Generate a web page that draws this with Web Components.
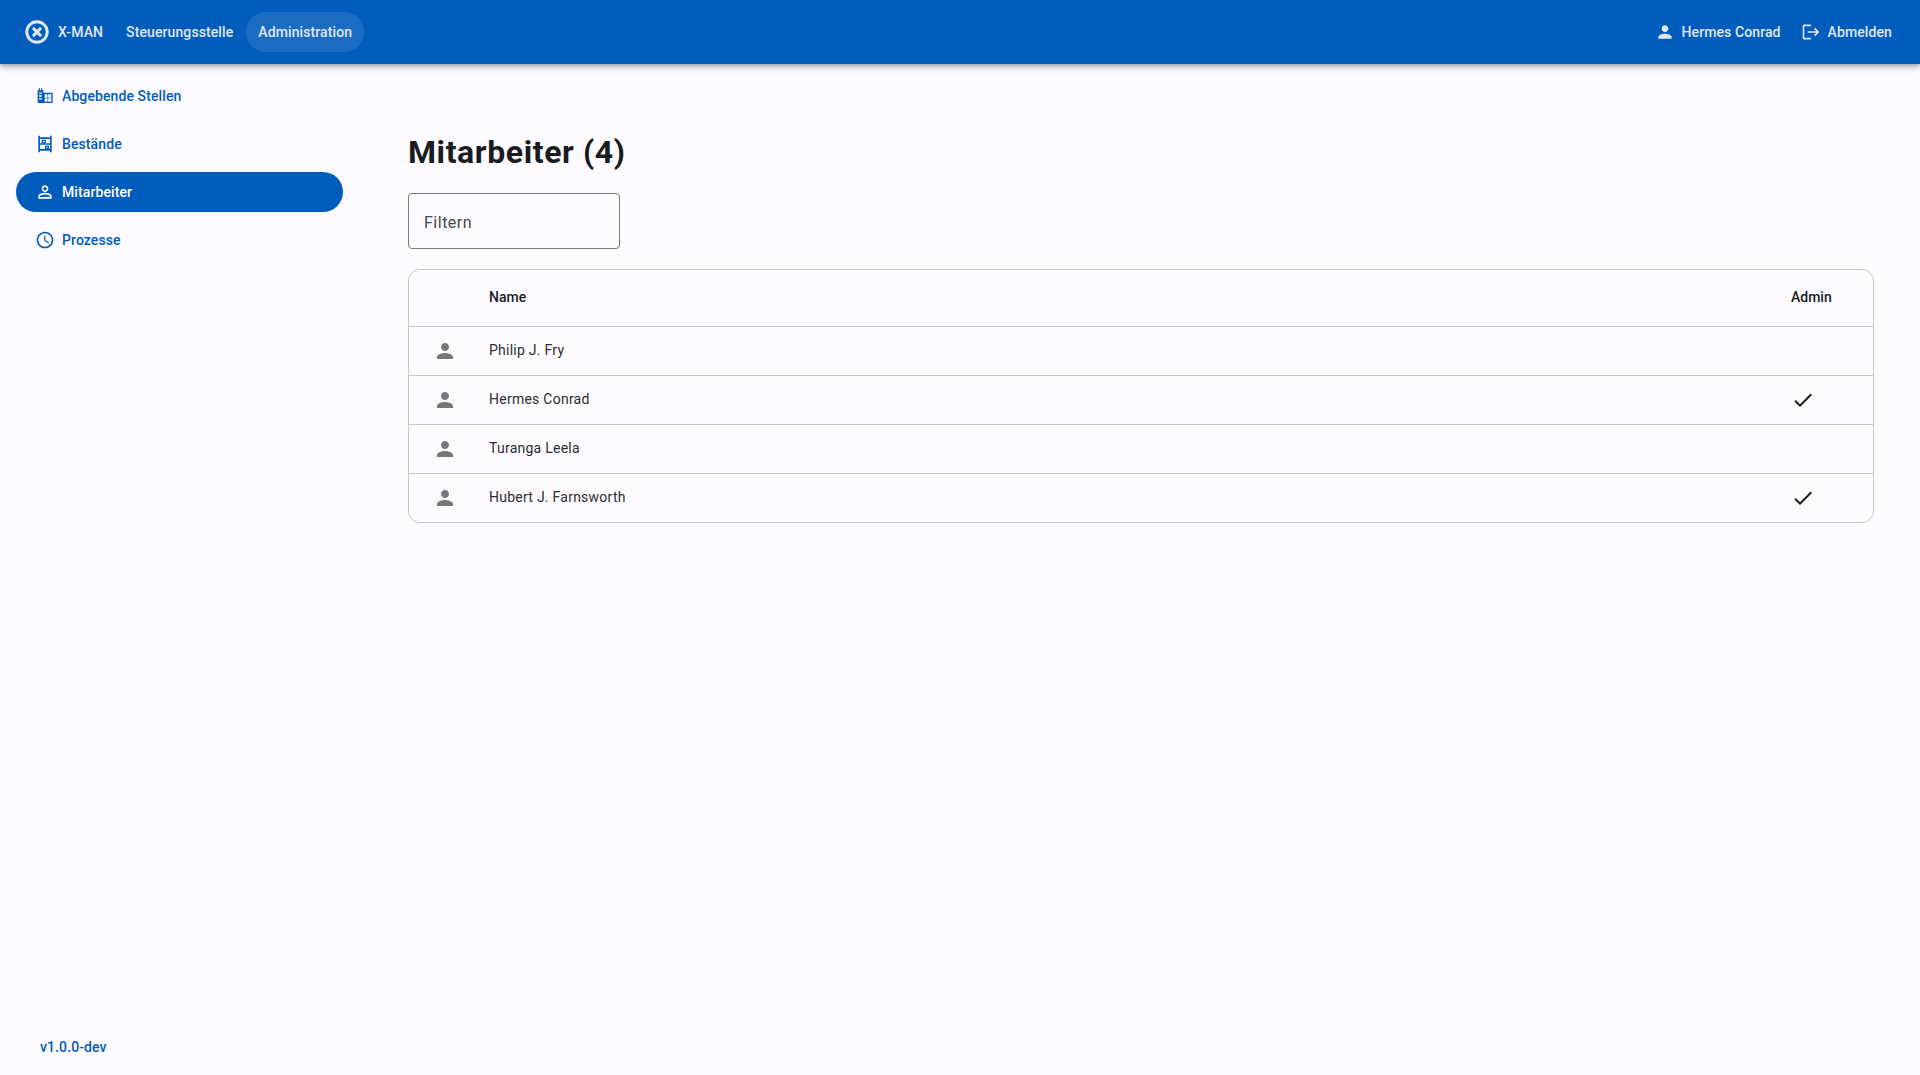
<!DOCTYPE html>
<html lang="de">
<head>
<meta charset="utf-8">
<title>X-MAN</title>
<style>
    html, body { margin: 0; height: 100%; }
    body {
        background: #fdfbff;
        color: #1a1b1f;
        font-family: Roboto, "Liberation Sans", sans-serif;
    }
</style>
</head>
<body>
<xman-app>
    <xman-header slot="header"></xman-header>
    <xman-sidenav slot="side">
        <xman-nav-item icon="domain">Abgebende Stellen</xman-nav-item>
        <xman-nav-item icon="shelves">Bestände</xman-nav-item>
        <xman-nav-item icon="person_outline" active>Mitarbeiter</xman-nav-item>
        <xman-nav-item icon="schedule">Prozesse</xman-nav-item>
    </xman-sidenav>
    <xman-staff-page>
        <xman-staff-row name="Philip J. Fry"></xman-staff-row>
        <xman-staff-row name="Hermes Conrad" admin></xman-staff-row>
        <xman-staff-row name="Turanga Leela"></xman-staff-row>
        <xman-staff-row name="Hubert J. Farnsworth" admin></xman-staff-row>
    </xman-staff-page>
</xman-app>

<script>
const ICONS = {
    person: '<path d="M12 12c2.21 0 4-1.79 4-4s-1.79-4-4-4-4 1.79-4 4 1.79 4 4 4zm0 2c-2.67 0-8 1.34-8 4v2h16v-2c0-2.66-5.33-4-8-4z"/>',
    person_outline: '<path d="M12 5.9c1.16 0 2.1.94 2.1 2.1s-.94 2.1-2.1 2.1S9.9 9.16 9.9 8s.94-2.1 2.1-2.1m0 9c2.97 0 6.1 1.46 6.1 2.1v1.1H5.9V17c0-.64 3.13-2.1 6.1-2.1M12 4C9.79 4 8 5.79 8 8s1.79 4 4 4 4-1.79 4-4-1.79-4-4-4zm0 9c-2.67 0-8 1.34-8 4v3h16v-3c0-2.66-5.33-4-8-4z"/>',
    logout: '<path d="M17 7l-1.41 1.41L18.17 11H8v2h10.17l-2.58 2.58L17 17l5-5zM4 5h8V3H4c-1.1 0-2 .9-2 2v14c0 1.1.9 2 2 2h8v-2H4V5z"/>',
    check: '<path d="M9 16.17L4.83 12l-1.42 1.41L9 19 21 7l-1.41-1.41z"/>',
    logo: '<circle cx="12" cy="12" r="9.4" fill="none" stroke="currentColor" stroke-width="2.7"/><path fill="none" stroke="currentColor" stroke-width="2.7" d="M8.2 8.2l7.6 7.6M15.8 8.2l-7.6 7.6"/>',
    schedule: '<path d="M11.99 2C6.47 2 2 6.48 2 12s4.47 10 9.99 10C17.52 22 22 17.52 22 12S17.52 2 11.99 2zM12 20c-4.42 0-8-3.58-8-8s3.58-8 8-8 8 3.58 8 8-3.58 8-8 8zm.5-13H11v6l5.25 3.15.75-1.23-4.5-2.67z"/>',
    domain: '<path fill-rule="evenodd" d="M3.2 5h1.4V2.8h1.4V5h1.4V2.8h1.4V5H10v3.2h11.2v12.2H3.2V5zM4.8 7.8v1.6h3.6V7.8H4.8zm0 3.4v1.6h3.6v-1.6H4.8zm0 3.4v1.6h3.6v-1.6H4.8zM11.6 10v4h3.4v-4h-3.4zm4.2 0v4h3.8v-4h-3.8zm-4.2 4.8v4h3.4v-4h-3.4zm4.2 0v4h3.8v-4h-3.8z"/>',
    shelves: '<path fill-rule="evenodd" d="M4 2h2v2h12V2h2v20h-2v-2H6v2H4V2zm2 4v5h12V6H6zm0 7v5h12v-5H6z"/><path fill-rule="evenodd" d="M8 7h5v4H8V7zm1.5 1.5v1h2v-1h-2zM12 14h5v4h-5v-4zm1.5 1.5v1h2v-1h-2z"/>'
};

function icon(name, size) {
    return `<svg width="${size}" height="${size}" viewBox="0 0 24 24" fill="currentColor" style="display:block;flex:none">${ICONS[name]}</svg>`;
}

class XmanApp extends HTMLElement {
    connectedCallback() {
        this.attachShadow({ mode: 'open' });
        this.shadowRoot.innerHTML = `
            <style>
                :host {
                    display: flex;
                    flex-direction: column;
                    height: 100vh;
                    overflow: hidden;
                }
                main {
                    flex: 1;
                    display: flex;
                    min-height: 0;
                }
            </style>
            <slot name="header"></slot>
            <main>
                <slot name="side"></slot>
                <slot></slot>
            </main>
        `;
    }
}

class XmanHeader extends HTMLElement {
    connectedCallback() {
        this.attachShadow({ mode: 'open' });
        this.shadowRoot.innerHTML = `
            <style>
                :host {
                    display: flex;
                    align-items: center;
                    flex: none;
                    height: 64px;
                    padding: 0 16px 0 8px;
                    background: #005cbb;
                    color: #e2e8f5;
                    position: relative;
                    z-index: 2;
                    box-shadow: 0 2px 4px -1px rgba(0,0,0,.2), 0 4px 5px 0 rgba(0,0,0,.14), 0 1px 10px 0 rgba(0,0,0,.12);
                    font: 500 14px Roboto, sans-serif;
                    letter-spacing: .1px;
                }
                a {
                    display: flex;
                    align-items: center;
                    gap: 7px;
                    height: 40px;
                    padding: 0 12px;
                    border-radius: 20px;
                    color: inherit;
                    text-decoration: none;
                    white-space: nowrap;
                }
                .brand { padding: 0 11px 0 16px; gap: 8px; }
                .nav { margin-right: 1px; }
                .current { background: rgba(255,255,255,.1); }
                .spacer { flex: 1; }
                .with-icon { padding-left: 8px; }
            </style>
            <a class="brand" href="#">${icon('logo', 26)}<span>X-MAN</span></a>
            <a class="nav" href="#">Steuerungsstelle</a>
            <a class="nav current" href="#">Administration</a>
            <div class="spacer"></div>
            <a class="with-icon" href="#">${icon('person', 20)}<span>Hermes Conrad</span></a>
            <a class="with-icon" href="#">${icon('logout', 20)}<span>Abmelden</span></a>
        `;
    }
}

class XmanSidenav extends HTMLElement {
    connectedCallback() {
        this.attachShadow({ mode: 'open' });
        this.shadowRoot.innerHTML = `
            <style>
                :host {
                    display: flex;
                    flex-direction: column;
                    flex: none;
                    box-sizing: border-box;
                    width: 359px;
                    padding: 8px 16px 18px;
                }
                nav {
                    flex: 1;
                    display: flex;
                    flex-direction: column;
                    gap: 8px;
                    padding-top: 4px;
                }
                .version {
                    padding-left: 24px;
                    color: #005cbb;
                    font: 500 14px/20px Roboto, sans-serif;
                    letter-spacing: .1px;
                }
            </style>
            <nav><slot></slot></nav>
            <div class="version">v1.0.0-dev</div>
        `;
    }
}

class XmanNavItem extends HTMLElement {
    connectedCallback() {
        this.attachShadow({ mode: 'open' });
        this.shadowRoot.innerHTML = `
            <style>
                :host {
                    display: flex;
                    align-items: center;
                    gap: 7px;
                    height: 40px;
                    padding-left: 19px;
                    border-radius: 20px;
                    color: #005cbb;
                    font: 500 14px Roboto, sans-serif;
                    letter-spacing: .1px;
                }
                :host([active]) {
                    background: #005cbb;
                    color: #fff;
                }
            </style>
            ${icon(this.getAttribute('icon'), 20)}
            <span><slot></slot></span>
        `;
    }
}

class XmanStaffPage extends HTMLElement {
    connectedCallback() {
        this.attachShadow({ mode: 'open' });
        this.shadowRoot.innerHTML = `
            <style>
                :host {
                    display: block;
                    flex: 1;
                    min-width: 0;
                    padding: 0 46px 0 49px;
                }
                h1 {
                    margin: 0;
                    padding-top: 64px;
                    font: 700 32px/48px Roboto, sans-serif;
                    letter-spacing: .6px;
                    color: #1a1b1f;
                }
                .filter {
                    box-sizing: border-box;
                    display: flex;
                    align-items: center;
                    width: 212px;
                    height: 56px;
                    margin-top: 17px;
                    padding: 2px 0 0 15px;
                    border: 1px solid #74777f;
                    border-radius: 4px;
                    color: #44474e;
                    font: 400 16px Roboto, sans-serif;
                    letter-spacing: .5px;
                }
                .table {
                    margin-top: 20px;
                    border: 1px solid #c4c6d0;
                    border-radius: 12px;
                    overflow: hidden;
                }
                .head {
                    display: grid;
                    grid-template-columns: 64px 1fr 98px;
                    align-items: center;
                    height: 54px;
                    padding-bottom: 2px;
                    font: 500 14px Roboto, sans-serif;
                    color: #1a1b1f;
                }
                .head span { padding-left: 16px; }
            </style>
            <h1>Mitarbeiter (4)</h1>
            <div class="filter">Filtern</div>
            <div class="table">
                <div class="head"><i></i><span>Name</span><span>Admin</span></div>
                <slot></slot>
            </div>
        `;
    }
}

class XmanStaffRow extends HTMLElement {
    connectedCallback() {
        this.attachShadow({ mode: 'open' });
        this.shadowRoot.innerHTML = `
            <style>
                :host {
                    display: grid;
                    grid-template-columns: 64px 1fr 98px;
                    align-items: center;
                    height: 48px;
                    border-top: 1px solid #c4c6d0;
                    font: 400 14px Roboto, sans-serif;
                    letter-spacing: .25px;
                    color: #2b2c31;
                }
                .person {
                    padding-left: 24px;
                    color: #74777f;
                }
                .name {
                    padding: 0 0 2px 16px;
                }
                .admin {
                    padding-left: 16px;
                    color: #1a1b1f;
                }
            </style>
            <div class="person">${icon('person', 24)}</div>
            <div class="name">${this.getAttribute('name')}</div>
            <div class="admin">${this.hasAttribute('admin') ? icon('check', 24) : ''}</div>
        `;
    }
}

customElements.define('xman-app', XmanApp);
customElements.define('xman-header', XmanHeader);
customElements.define('xman-sidenav', XmanSidenav);
customElements.define('xman-nav-item', XmanNavItem);
customElements.define('xman-staff-page', XmanStaffPage);
customElements.define('xman-staff-row', XmanStaffRow);
</script>
</body>
</html>
